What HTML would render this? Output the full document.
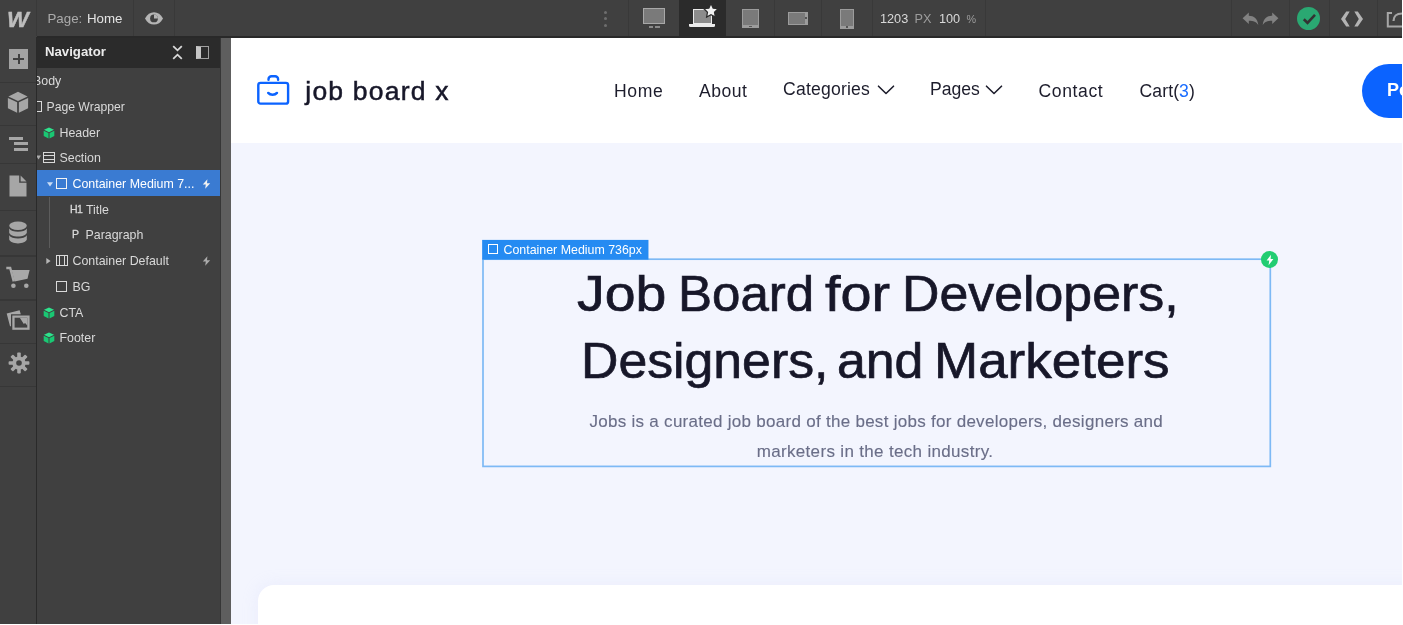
<!DOCTYPE html>
<html>
<head>
<meta charset="utf-8">
<style>
*{box-sizing:border-box;margin:0;padding:0}
html,body{width:1403px;height:625px;overflow:hidden;background:#fff;font-family:"Liberation Sans",sans-serif}
.abs{position:absolute}
#root{position:absolute;left:0;top:0;width:1403px;height:625px;overflow:hidden;background:#fff}
/* app chrome */
#app{position:absolute;left:0;top:0;width:1402px;height:624px;overflow:hidden;background:#5e5e5e;will-change:transform}
#topbar{position:absolute;left:0;top:0;width:1402px;height:37px;background:#404040}
#topline{position:absolute;left:36.500px;top:36.400px;width:1366px;height:1.600px;background:#292929}
#topbar .sep{position:absolute;top:0;width:1px;height:36px;background:#393939}
#lefttool{position:absolute;left:0;top:37px;width:37px;height:587px;background:#404040;border-right:1px solid #2a2a2a}
#lefttool .hs{position:absolute;left:0;width:36px;height:1.300px;background:#373737}
#nav{position:absolute;left:37px;top:37px;width:184.300px;height:587px;background:#404040;overflow:hidden;border-right:1.600px solid #363636}
#navhead{position:absolute;left:0;top:0;width:184px;height:30.500px;background:#2b2b2b}
.nt{position:absolute;color:#d9d9d9;font-size:12.4px;line-height:16px;white-space:nowrap}
#sel{position:absolute;left:0;top:133.300px;width:183px;height:25.900px;background:#3a7bd2}
/* canvas */
#canvas{position:absolute;left:231px;top:37.5px;width:1171px;height:587px;background:#f3f5fe;overflow:hidden}
#siteheader{position:absolute;left:0;top:0;width:1171px;height:105.500px;background:#fff}
.navl{position:absolute;color:#1d1d2c;font-size:17.6px;line-height:22px;white-space:nowrap}
#card{position:absolute;left:26.600px;top:547.200px;width:1200px;height:80px;background:#fff;border-radius:16px 0 0 0;box-shadow:0 0 16px rgba(205,210,245,.22)}
.hw{position:absolute;transform-origin:0 0;color:#171729;white-space:nowrap;font-size:50px;line-height:60px;-webkit-text-stroke:.7px #171729}
.para{position:absolute;color:#6a6e88;font-size:17px;line-height:22px;white-space:nowrap;-webkit-text-stroke:.12px #6a6e88}
</style>
</head>
<body>
<div id="root">
<div id="app">

<!-- CANVAS -->
<div id="canvas">
  <div id="siteheader"></div>
  <!-- logo -->
  <svg class="abs" style="left:20px;top:30px" width="44" height="44" viewBox="0 0 44 44" fill="none" stroke="#0b63ff" stroke-width="2.400" stroke-linecap="round" stroke-linejoin="round">
    <rect x="7.300" y="14.900" width="29.800" height="20.700" rx="2.200"/>
    <path d="M17.500 11.800v-.6a3 3 0 0 1 3-3h3.600a3 3 0 0 1 3 3v.6"/>
    <path d="M17.200 24.900c1.100 1.300 2.700 1.900 4.400 1.900s3.300-.6 4.400-1.900"/>
  </svg>
  <div class="abs" id="logotxt" style="left:74.300px;top:35.400px;font-size:26.500px;line-height:36px;color:#171729;white-space:nowrap;letter-spacing:1.200px;-webkit-text-stroke:.5px #171729">job board x</div>
  <div class="navl" id="n1" style="left:383px;top:42.700px;letter-spacing:.6px">Home</div>
  <div class="navl" id="n2" style="left:468px;top:42.700px;letter-spacing:.5px">About</div>
  <div class="navl" id="n3" style="left:552px;top:40.500px;letter-spacing:.2px">Categories</div>
  <div class="navl" id="n4" style="left:699px;top:40.5px">Pages</div>
  <div class="navl" id="n5" style="left:807.500px;top:42.700px;letter-spacing:.6px">Contact</div>
  <div class="navl" id="n6" style="left:908.500px;top:42.700px;letter-spacing:.1px">Cart(<span style="color:#1a6dff">3</span>)</div>
  <svg class="abs" style="left:646px;top:46px" width="18" height="12" viewBox="0 0 18 12" fill="none" stroke="#1d1d2c" stroke-width="1.6" stroke-linecap="round" stroke-linejoin="round"><path d="M1.5 2.2 9 9.5l7.5-7.3"/></svg>
  <svg class="abs" style="left:754px;top:46px" width="18" height="12" viewBox="0 0 18 12" fill="none" stroke="#1d1d2c" stroke-width="1.6" stroke-linecap="round" stroke-linejoin="round"><path d="M1.5 2.2 9 9.5l7.5-7.3"/></svg>
  <!-- button -->
  <div class="abs" style="left:1130.5px;top:26px;width:160px;height:54px;border-radius:27px;background:#0b63ff"></div>
  <div class="abs" id="btntxt" style="left:1156px;top:41px;color:#fff;font-weight:bold;font-size:18px;line-height:22px;white-space:nowrap">Post a job</div>

  <!-- hero -->
  <!--H1-->
  <div class="hw" id="wa0" style="left:346.20px;top:226.9px;transform:scaleX(1.1085)">Job</div>
  <div class="hw" id="wa1" style="left:446.80px;top:226.9px;transform:scaleX(1.0207)">Board</div>
  <div class="hw" id="wa2" style="left:593.90px;top:226.9px;transform:scaleX(1.1156)">for</div>
  <div class="hw" id="wa3" style="left:670.90px;top:226.9px;transform:scaleX(1.0366)">Developers,</div>
  <div class="hw" id="wb0" style="left:350.00px;top:293.6px;transform:scaleX(1.0352)">Designers,</div>
  <div class="hw" id="wb1" style="left:606.20px;top:293.6px;transform:scaleX(1.0358)">and</div>
  <div class="hw" id="wb2" style="left:702.50px;top:293.6px;transform:scaleX(1.0598)">Marketers</div>
  <!--/H1-->
  <div class="para" id="p1" style="left:358.500px;top:373.500px;letter-spacing:.28px">Jobs is a curated job board of the best jobs for developers, designers and</div>
  <div class="para" id="p2" style="left:525.700px;top:403.500px;letter-spacing:.33px">marketers in the tech industry.</div>

  <!-- selection outline -->
  <svg class="abs" style="left:240.500px;top:190px" width="810" height="250" viewBox="0 0 810 250"><rect x="11" y="31.200" width="787.300" height="207.200" fill="none" stroke="#7db9f5" stroke-width="1.700"/><rect x="10.150" y="11.900" width="166.300" height="19.700" fill="#258bf2"/></svg>
    <div class="abs" style="left:256.5px;top:206px;width:10.5px;height:10.5px;border:1.3px solid #fff"></div>
  <div class="abs" id="seltag" style="left:272.5px;top:204px;color:#fff;font-size:12.4px;line-height:16px;white-space:nowrap">Container Medium 736px</div>
  <div class="abs" style="left:1029.5px;top:213px;width:17.5px;height:17.5px;border-radius:50%;background:#22cd72"></div>
  <svg class="abs" style="left:1033.5px;top:216px" width="10" height="12" viewBox="0 0 10 12"><path d="M6 .8 1.6 6.6h2.6L3.6 11.2 8.4 5H5.6z" fill="#fff"/></svg>

  <div id="card"></div>
</div>

<!-- TOP BAR -->
<div id="topbar">
  <div class="sep" style="left:35.5px"></div>
  <div class="sep" style="left:133px"></div>
  <div class="sep" style="left:174px"></div>
  <div class="sep" style="left:628px"></div>
  <div class="sep" style="left:773.5px"></div>
  <div class="sep" style="left:821px"></div>
  <div class="sep" style="left:871.5px"></div>
  <div class="sep" style="left:984.5px"></div>
  <div class="sep" style="left:1230.5px"></div>
  <div class="sep" style="left:1288.5px"></div>
  <div class="sep" style="left:1328.5px"></div>
  <div class="sep" style="left:1376.5px"></div>
  <!-- W logo -->
  <div class="abs" id="wlogo" style="left:7.300px;top:7px;font-size:21.500px;line-height:26px;-webkit-text-stroke:.4px #bdbdbd;font-style:italic;font-weight:bold;color:#bdbdbd;white-space:nowrap;transform:scaleX(1.07);transform-origin:0 0">W</div>
  <div class="abs" id="tpage" style="margin-top:.7px;left:47.5px;top:10px;font-size:13.3px;line-height:16px;color:#ababab;white-space:nowrap">Page:</div>
  <div class="abs" id="thome" style="margin-top:.7px;left:87px;top:10px;font-size:13.3px;line-height:16px;color:#e3e3e3;white-space:nowrap">Home</div>
  <!-- eye -->
  <svg class="abs" style="left:144px;top:11px" width="20" height="15" viewBox="0 0 20 15"><path d="M1 7.4C3.2 3.2 6.4 1.2 10 1.2s6.800 2 9 6.200c-2.200 4.200-5.400 6.200-9 6.200S3.200 11.600 1 7.400z" fill="#b5b5b5"/><circle cx="10" cy="7.400" r="3.900" fill="#404040"/><path d="M10 3.500v3.900h3.900A3.900 3.900 0 0 0 10 3.500z" fill="#b5b5b5"/></svg>
  <!-- dots -->
  <div class="abs" style="left:603.5px;top:10.5px;width:3.400px;height:3.400px;border-radius:50%;background:#6e6e6e"></div>
  <div class="abs" style="left:603.5px;top:17px;width:3.400px;height:3.400px;border-radius:50%;background:#6e6e6e"></div>
  <div class="abs" style="left:603.5px;top:23.500px;width:3.400px;height:3.400px;border-radius:50%;background:#6e6e6e"></div>
  <!-- desktop -->
  <div class="abs" style="left:643px;top:8px;width:22px;height:16px;background:#7a7a7a;border:1.300px solid #a8a8a8"></div>
  <div class="abs" style="left:648.500px;top:26px;width:4.500px;height:2px;background:#8a8a8a"></div>
  <div class="abs" style="left:655px;top:26px;width:4.500px;height:2px;background:#8a8a8a"></div>
  <!-- active laptop -->
  <div class="abs" style="left:679px;top:0;width:46.500px;height:36px;background:#2b2b2b"></div>
  <div class="abs" style="left:692.500px;top:9.300px;width:19px;height:14.500px;background:#8c8c8c;border:1.500px solid #ebebeb"></div>
  <div class="abs" style="left:689px;top:24px;width:26px;height:3.400px;background:#ebebeb;border-radius:0 0 1.500px 1.500px"></div>
  <svg class="abs" style="left:702.500px;top:2.500px" width="16" height="15" viewBox="0 0 16 15"><path d="M8 .6l2.150 4.500 4.950.650-3.600 3.450.9 4.900L8 11.700l-4.400 2.400.9-4.900L.9 5.750l4.950-.65z" fill="#f2f2f2" stroke="#2b2b2b" stroke-width="1.200"/></svg>
  <!-- tablet -->
  <div class="abs" style="left:742px;top:8.500px;width:17px;height:19.500px;background:#7a7a7a;border:1.300px solid #9c9c9c;border-bottom-width:3.500px"></div>
  <div class="abs" style="left:749px;top:25.500px;width:3px;height:1.500px;background:#555"></div>
  <!-- phone landscape -->
  <div class="abs" style="left:788px;top:11.500px;width:20px;height:13.500px;background:#7a7a7a;border:1.300px solid #9c9c9c;border-right-width:3.500px"></div>
  <div class="abs" style="left:805.200px;top:17.400px;width:1.600px;height:1.800px;background:#555"></div>
  <!-- phone portrait -->
  <div class="abs" style="left:840px;top:9px;width:13.500px;height:19.500px;background:#7a7a7a;border:1.300px solid #9c9c9c;border-bottom-width:3.500px"></div>
  <div class="abs" style="left:846px;top:26px;width:1.800px;height:1.500px;background:#555"></div>
  <div class="abs" id="t1203" style="margin-top:.5px;left:880px;top:10px;font-size:12.700px;line-height:16px;color:#d9d9d9;white-space:nowrap">1203</div>
  <div class="abs" id="tpx" style="margin-top:.5px;left:914.500px;top:10px;font-size:12.700px;line-height:16px;color:#9c9c9c;white-space:nowrap">PX</div>
  <div class="abs" id="t100" style="margin-top:.5px;left:939px;top:10px;font-size:12.700px;line-height:16px;color:#d9d9d9;white-space:nowrap">100</div>
  <div class="abs" id="tpct" style="margin-top:.5px;left:966.500px;top:10px;font-size:10.800px;line-height:16px;color:#9c9c9c;white-space:nowrap">%</div>
  <!-- undo / redo -->
  <svg class="abs" style="left:1241.500px;top:11.500px" width="17" height="14" viewBox="0 0 17 14"><path d="M6.800.5v3.300c5.200 0 8.700 2.700 9.500 9.200-1.900-3.200-4.700-4.300-9.500-4.300v3.400L.6 6.300z" fill="#828282"/></svg>
  <svg class="abs" style="left:1262px;top:11.500px;transform:scaleX(-1)" width="17" height="14" viewBox="0 0 17 14"><path d="M6.800.5v3.300c5.200 0 8.700 2.700 9.500 9.200-1.900-3.200-4.700-4.300-9.500-4.300v3.400L.6 6.300z" fill="#828282"/></svg>
  <!-- green check -->
  <div class="abs" style="left:1297px;top:6.800px;width:23.400px;height:23.400px;border-radius:50%;background:#2aa872"></div>
  <svg class="abs" style="left:1301.500px;top:12.500px" width="15" height="12" viewBox="0 0 15 12"><path d="M1.800 6.300l3.700 3.500 7.500-8" fill="none" stroke="#333" stroke-width="2.600"/></svg>
  <!-- code -->
  <svg class="abs" style="left:1339.500px;top:11px" width="24" height="16" viewBox="0 0 24 16"><path d="M6.200.6h3.500L5.200 8l4.500 7.400H6.200L1 8zM17.800.6h-3.500L18.800 8l-4.500 7.400h3.500L23 8z" fill="#b3b3b3"/></svg>
  <!-- export -->
  <svg class="abs" style="left:1386px;top:11px" width="20" height="17" viewBox="0 0 20 17"><path d="M6 2H1.800v13.500H20" fill="none" stroke="#a6a6a6" stroke-width="2"/><path d="M7.500 10c0-4.500 3-7.500 8.500-7.500" fill="none" stroke="#a6a6a6" stroke-width="2.200"/></svg>
</div>

<!-- LEFT TOOLBAR -->
<div id="lefttool">
  <div class="hs" style="top:44.7px"></div>
  <div class="hs" style="top:87.5px"></div>
  <div class="hs" style="top:126.2px"></div>
  <div class="hs" style="top:172.8px"></div>
  <div class="hs" style="top:218.4px"></div>
  <div class="hs" style="top:262.4px"></div>
  <div class="hs" style="top:305.9px"></div>
  <div class="hs" style="top:348.600px"></div>
  <!-- add (+) -->
  <div class="abs" style="left:9px;top:12px;width:19.300px;height:19.800px;background:#a3a3a3"></div>
  <div class="abs" style="left:13.300px;top:20.900px;width:10.600px;height:2px;background:#404040"></div>
  <div class="abs" style="left:17.600px;top:16.600px;width:2px;height:10.600px;background:#404040"></div>
  <!-- cube -->
  <svg class="abs" style="left:7px;top:54px" width="22" height="23" viewBox="0 0 22 23"><path d="M11 .8l9.600 4.600-9.600 4.500-9.600-4.500z" fill="#a6a6a6"/><path d="M.9 7l9.200 4.300v10.400L.9 17.200z" fill="#a6a6a6"/><path d="M21.100 7l-9.200 4.300v10.400l9.200-4.500z" fill="#a6a6a6"/></svg>
  <!-- navigator lines -->
  <div class="abs" style="left:8.500px;top:99.500px;width:14px;height:3.200px;background:#a6a6a6"></div>
  <div class="abs" style="left:13.500px;top:105.200px;width:14.500px;height:3.200px;background:#a6a6a6"></div>
  <div class="abs" style="left:13.500px;top:111px;width:14.500px;height:3.200px;background:#a6a6a6"></div>
  <!-- page -->
  <svg class="abs" style="left:9px;top:138px" width="18" height="22" viewBox="0 0 18 22"><path d="M.5.500h9.700v7.200h7.300v13.800H.5z" fill="#a6a6a6"/><path d="M11.600.5l5.900 5.900h-5.900z" fill="#a6a6a6"/></svg>
  <!-- database -->
  <svg class="abs" style="left:8px;top:184px" width="20" height="24" viewBox="0 0 20 24"><ellipse cx="10" cy="4.700" rx="8.800" ry="4.200" fill="#a6a6a6"/><path d="M1.200 7.500c1.200 2.200 4.800 3.300 8.800 3.300s7.600-1.100 8.800-3.300v4.300c-.6 2.400-4.400 3.800-8.800 3.800s-8.200-1.400-8.800-3.800z" fill="#a6a6a6"/><path d="M1.200 14.300c1.200 2.200 4.800 3.300 8.800 3.300s7.600-1.100 8.800-3.300v4.300c-.6 2.400-4.400 3.800-8.800 3.800s-8.200-1.400-8.800-3.800z" fill="#a6a6a6"/></svg>
  <!-- cart -->
  <svg class="abs" style="left:5px;top:228px" width="26" height="24" viewBox="0 0 26 24"><path d="M1.300 3h3.900l3.500 13.400" fill="none" stroke="#a8a8a8" stroke-width="2.300"/><path d="M6.600 5h18l-2.100 8.700-12.900 2.800z" fill="#a8a8a8"/><circle cx="8.400" cy="20.800" r="2.300" fill="#a8a8a8"/><circle cx="21.300" cy="20.800" r="2.300" fill="#a8a8a8"/></svg>
  <!-- assets -->
  <svg class="abs" style="left:6px;top:272px" width="26" height="24" viewBox="0 0 26 24"><path d="M.7 4.600L13.600 1.300l1.200 3.900H5v11.900l-.9.300z" fill="#a8a8a8"/><rect x="6.300" y="6.500" width="17.300" height="14.300" fill="#a8a8a8"/><path d="M8.600 18.600v-9.900h12.700v9.900z" fill="#404040"/><path d="M13.800 8.700h7.500v7.800l-2.200-2.600-1.300 1.100z" fill="#a8a8a8"/></svg>
  <!-- settings -->
  <svg class="abs" style="left:7.500px;top:315px" width="22" height="22" viewBox="0 0 22 22"><g fill="#a6a6a6"><circle cx="11" cy="11" r="6.600"/><rect x="9.200" y=".6" width="3.600" height="20.800" rx=".8"/><rect x="9.200" y=".6" width="3.600" height="20.800" rx=".8" transform="rotate(45 11 11)"/><rect x="9.200" y=".6" width="3.600" height="20.800" rx=".8" transform="rotate(90 11 11)"/><rect x="9.200" y=".6" width="3.600" height="20.800" rx=".8" transform="rotate(135 11 11)"/></g><circle cx="11" cy="11" r="2.800" fill="#404040"/></svg>
</div>

<!-- NAVIGATOR -->
<div id="nav">
  <div id="navhead"></div>
  <div class="abs" id="navtitle" style="left:8px;top:6.500px;font-size:13.200px;line-height:16px;font-weight:bold;color:#ececec;white-space:nowrap">Navigator</div>
  <svg class="abs" style="left:134.500px;top:8px" width="11" height="15" viewBox="0 0 11 15"><path d="M1.200 1.200L5.500 5.300 9.800 1.200M1.200 13.800L5.500 9.700l4.300 4.100" fill="none" stroke="#d9d9d9" stroke-width="1.800"/></svg>
  <div class="abs" style="left:158.500px;top:9px;width:13.500px;height:12.500px;border:1.300px solid #a0a0a0;border-left:5px solid #c6c6c6"></div>
  <div id="sel"></div>
  <div class="abs" style="left:12px;top:159.500px;width:1px;height:51px;background:#5c5c5c"></div>

  <div class="nt" id="r1" style="left:-4px;top:36px">Body</div>
  <div class="abs" style="left:-4px;top:63.500px;width:9px;height:11px;border:1.300px solid #d9d9d9"></div>
  <div class="nt" id="r2" style="left:9.500px;top:61.500px;font-size:12.200px">Page Wrapper</div>
  <svg class="abs" style="left:6px;top:89.5px" width="12" height="12" viewBox="0 0 12 12"><path d="M6 .4l5 2.400L6 5.200 1 2.800z" fill="#2de38c"/><path d="M.7 3.700l4.800 2.300v5.500L.7 9.100z" fill="#19c873"/><path d="M11.300 3.700L6.500 6v5.500l4.800-2.400z" fill="#19c873"/></svg>
  <div class="nt" id="r3" style="left:22.500px;top:87.500px">Header</div>
  <svg class="abs" style="left:-1px;top:118px" width="5" height="5" viewBox="0 0 5 5"><path d="M0 .5h5L2.500 4.500z" fill="#ababab"/></svg>
  <div class="abs" style="left:6px;top:115px;width:11.500px;height:11px;border:1.300px solid #d9d9d9;border-top-width:1.300px"></div>
  <div class="abs" style="left:6px;top:117.800px;width:11.500px;height:1.200px;background:#d9d9d9"></div>
  <div class="abs" style="left:6px;top:122.300px;width:11.500px;height:1.200px;background:#d9d9d9"></div>
  <div class="nt" id="r4" style="left:22.500px;top:113px">Section</div>
  <svg class="abs" style="left:9.500px;top:144.500px" width="6" height="5" viewBox="0 0 6 5"><path d="M0 .3h6L3 4.600z" fill="#c9dcf5"/></svg>
  <div class="abs" style="left:19.300px;top:141.300px;width:11px;height:10.600px;border:1.300px solid #f3f3f3"></div>
  <div class="nt" id="r5" style="left:35.500px;top:139px;color:#fff">Container Medium 7...</div>
  <svg class="abs" style="left:165px;top:142px" width="9" height="10" viewBox="0 0 9 10"><path d="M5.400.3L.8 5.600h3L3.200 9.700 8.200 4.200H5z" fill="#f1f1f1"/></svg>
  <div class="abs" id="ih1" style="left:33px;top:165.500px;font-size:10.500px;line-height:12px;font-weight:normal;-webkit-text-stroke:.3px #d9d9d9;color:#d9d9d9;white-space:nowrap;letter-spacing:-.5px">H1</div>
  <div class="nt" id="r6" style="left:49px;top:164.500px">Title</div>
  <div class="abs" id="ip" style="left:35px;top:191.300px;font-size:10.500px;line-height:12px;font-weight:normal;-webkit-text-stroke:.3px #d9d9d9;color:#d9d9d9;white-space:nowrap">P</div>
  <div class="nt" id="r7" style="left:48.500px;top:190px">Paragraph</div>
  <svg class="abs" style="left:9px;top:220.500px" width="5" height="6" viewBox="0 0 5 6"><path d="M.3 0v6L4.600 3z" fill="#b5b5b5"/></svg>
  <div class="abs" style="left:19px;top:218.300px;width:11.500px;height:11px;border:1.300px solid #d9d9d9"></div>
  <div class="abs" style="left:22px;top:218.300px;width:5.500px;height:11px;border-left:1.200px solid #d9d9d9;border-right:1.200px solid #d9d9d9"></div>
  <div class="nt" id="r8" style="left:35.500px;top:216px">Container Default</div>
  <svg class="abs" style="left:165px;top:219px" width="9" height="10" viewBox="0 0 9 10"><path d="M5.400.3L.8 5.600h3L3.200 9.700 8.200 4.200H5z" fill="#ababab"/></svg>
  <div class="abs" style="left:19.300px;top:244px;width:11px;height:10.600px;border:1.300px solid #d9d9d9"></div>
  <div class="nt" id="r9" style="left:35.500px;top:241.500px">BG</div>
  <svg class="abs" style="left:6px;top:269.5px" width="12" height="12" viewBox="0 0 12 12"><path d="M6 .4l5 2.400L6 5.200 1 2.800z" fill="#2de38c"/><path d="M.7 3.700l4.800 2.300v5.500L.7 9.100z" fill="#19c873"/><path d="M11.300 3.700L6.500 6v5.500l4.800-2.400z" fill="#19c873"/></svg>
  <div class="nt" id="r10" style="left:22.500px;top:267.500px">CTA</div>
  <svg class="abs" style="left:6px;top:295px" width="12" height="12" viewBox="0 0 12 12"><path d="M6 .4l5 2.400L6 5.200 1 2.800z" fill="#2de38c"/><path d="M.7 3.700l4.800 2.300v5.500L.7 9.100z" fill="#19c873"/><path d="M11.300 3.700L6.500 6v5.500l4.800-2.400z" fill="#19c873"/></svg>
  <div class="nt" id="r11" style="left:22.500px;top:293px">Footer</div>
</div>

<div id="topline"></div>
</div>
</div>
</body>
</html>
